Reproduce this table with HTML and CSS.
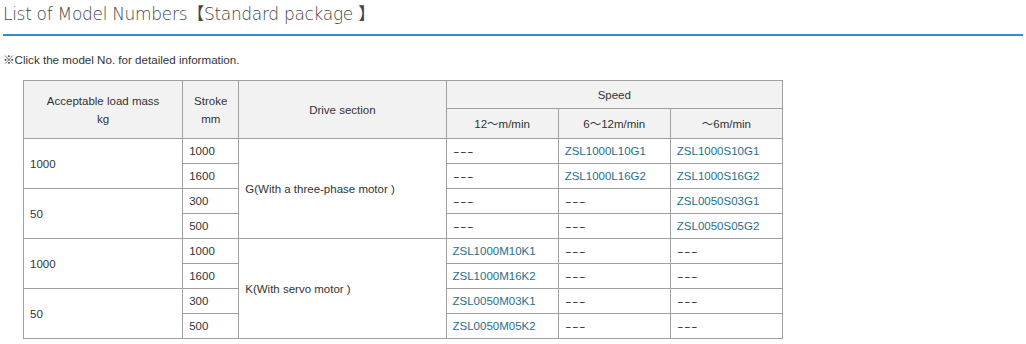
FILE: index.html
```html
<!DOCTYPE html>
<html>
<head>
<meta charset="utf-8">
<link rel="stylesheet" href="styles.css">
</head>
<body>
<div class="page">
  <h1 class="title">List of Model Numbers【Standard package 】</h1>
  <p class="note">※Click the model No. for detailed information.</p>
  <table class="models">
    <colgroup>
      <col class="c-load"><col class="c-stroke"><col class="c-drive"><col class="c-sp"><col class="c-sp"><col class="c-sp">
    </colgroup>
    <thead>
      <tr>
        <th rowspan="2">Acceptable load mass<br>kg</th>
        <th rowspan="2">Stroke<br>mm</th>
        <th rowspan="2">Drive section</th>
        <th colspan="3" class="h-speed">Speed</th>
      </tr>
      <tr class="h-sub">
        <th>12～m/min</th>
        <th>6～12m/min</th>
        <th>～6m/min</th>
      </tr>
    </thead>
    <tbody>
      <tr><td rowspan="2">1000</td><td>1000</td><td rowspan="4">G(With a three-phase motor )</td><td><span class="none">---</span></td><td><a href="#">ZSL1000L10G1</a></td><td><a href="#">ZSL1000S10G1</a></td></tr>
      <tr><td>1600</td><td><span class="none">---</span></td><td><a href="#">ZSL1000L16G2</a></td><td><a href="#">ZSL1000S16G2</a></td></tr>
      <tr><td rowspan="2">50</td><td>300</td><td><span class="none">---</span></td><td><span class="none">---</span></td><td><a href="#">ZSL0050S03G1</a></td></tr>
      <tr><td>500</td><td><span class="none">---</span></td><td><span class="none">---</span></td><td><a href="#">ZSL0050S05G2</a></td></tr>
      <tr><td rowspan="2">1000</td><td>1000</td><td rowspan="4">K(With servo motor )</td><td><a href="#">ZSL1000M10K1</a></td><td><span class="none">---</span></td><td><span class="none">---</span></td></tr>
      <tr><td>1600</td><td><a href="#">ZSL1000M16K2</a></td><td><span class="none">---</span></td><td><span class="none">---</span></td></tr>
      <tr><td rowspan="2">50</td><td>300</td><td><a href="#">ZSL0050M03K1</a></td><td><span class="none">---</span></td><td><span class="none">---</span></td></tr>
      <tr><td>500</td><td><a href="#">ZSL0050M05K2</a></td><td><span class="none">---</span></td><td><span class="none">---</span></td></tr>
    </tbody>
  </table>
</div>
</body>
</html>
```
FILE: styles.css
```css
html, body {
  margin: 0;
  padding: 0;
  background: #ffffff;
}
body {
  font-family: "Liberation Sans", "Noto Sans CJK JP", sans-serif;
  color: #333333;
}
.page {
  padding: 0 3px;
  width: 1020px;
}
.title {
  margin: 0;
  font-size: 17px;
  line-height: 24px;
  padding-top: 2px;
  padding-bottom: 8px;
  border-bottom: 2px solid #3a8cc8;
  color: #444444;
  font-family: "DejaVu Sans", "Noto Sans CJK JP", sans-serif;
  font-weight: 200;
  letter-spacing: -0.3px;
}
.note {
  margin: 0;
  padding-top: 17px;
  font-size: 11.6px;
  line-height: 14px;
  height: 27px;
}
.models {
  margin-left: 20px;
  border-collapse: collapse;
  font-size: 11.5px;
  table-layout: fixed;
  width: 760px;
}
.c-load { width: 159px; }
.c-stroke { width: 56px; }
.c-drive { width: 207px; }
.c-sp { width: 112px; }
.models th, .models td {
  border: 1px solid #a0a0a0;
  padding: 0 6px;
}
.models th {
  background: #f2f2f2;
  font-weight: normal;
  text-align: center;
  line-height: 18px;
  height: 57px;
}
.models th.h-speed { height: 27px; }
.models tr.h-sub th { height: 29px; }
.models td {
  text-align: left;
  height: 24px;
  line-height: 14px;
}
.models a {
  color: #1f6f8b;
  text-decoration: none;
}
.none {
  display: inline-block;
  transform: scaleX(1.7);
  transform-origin: left center;
  letter-spacing: 0.3px;
}
```
